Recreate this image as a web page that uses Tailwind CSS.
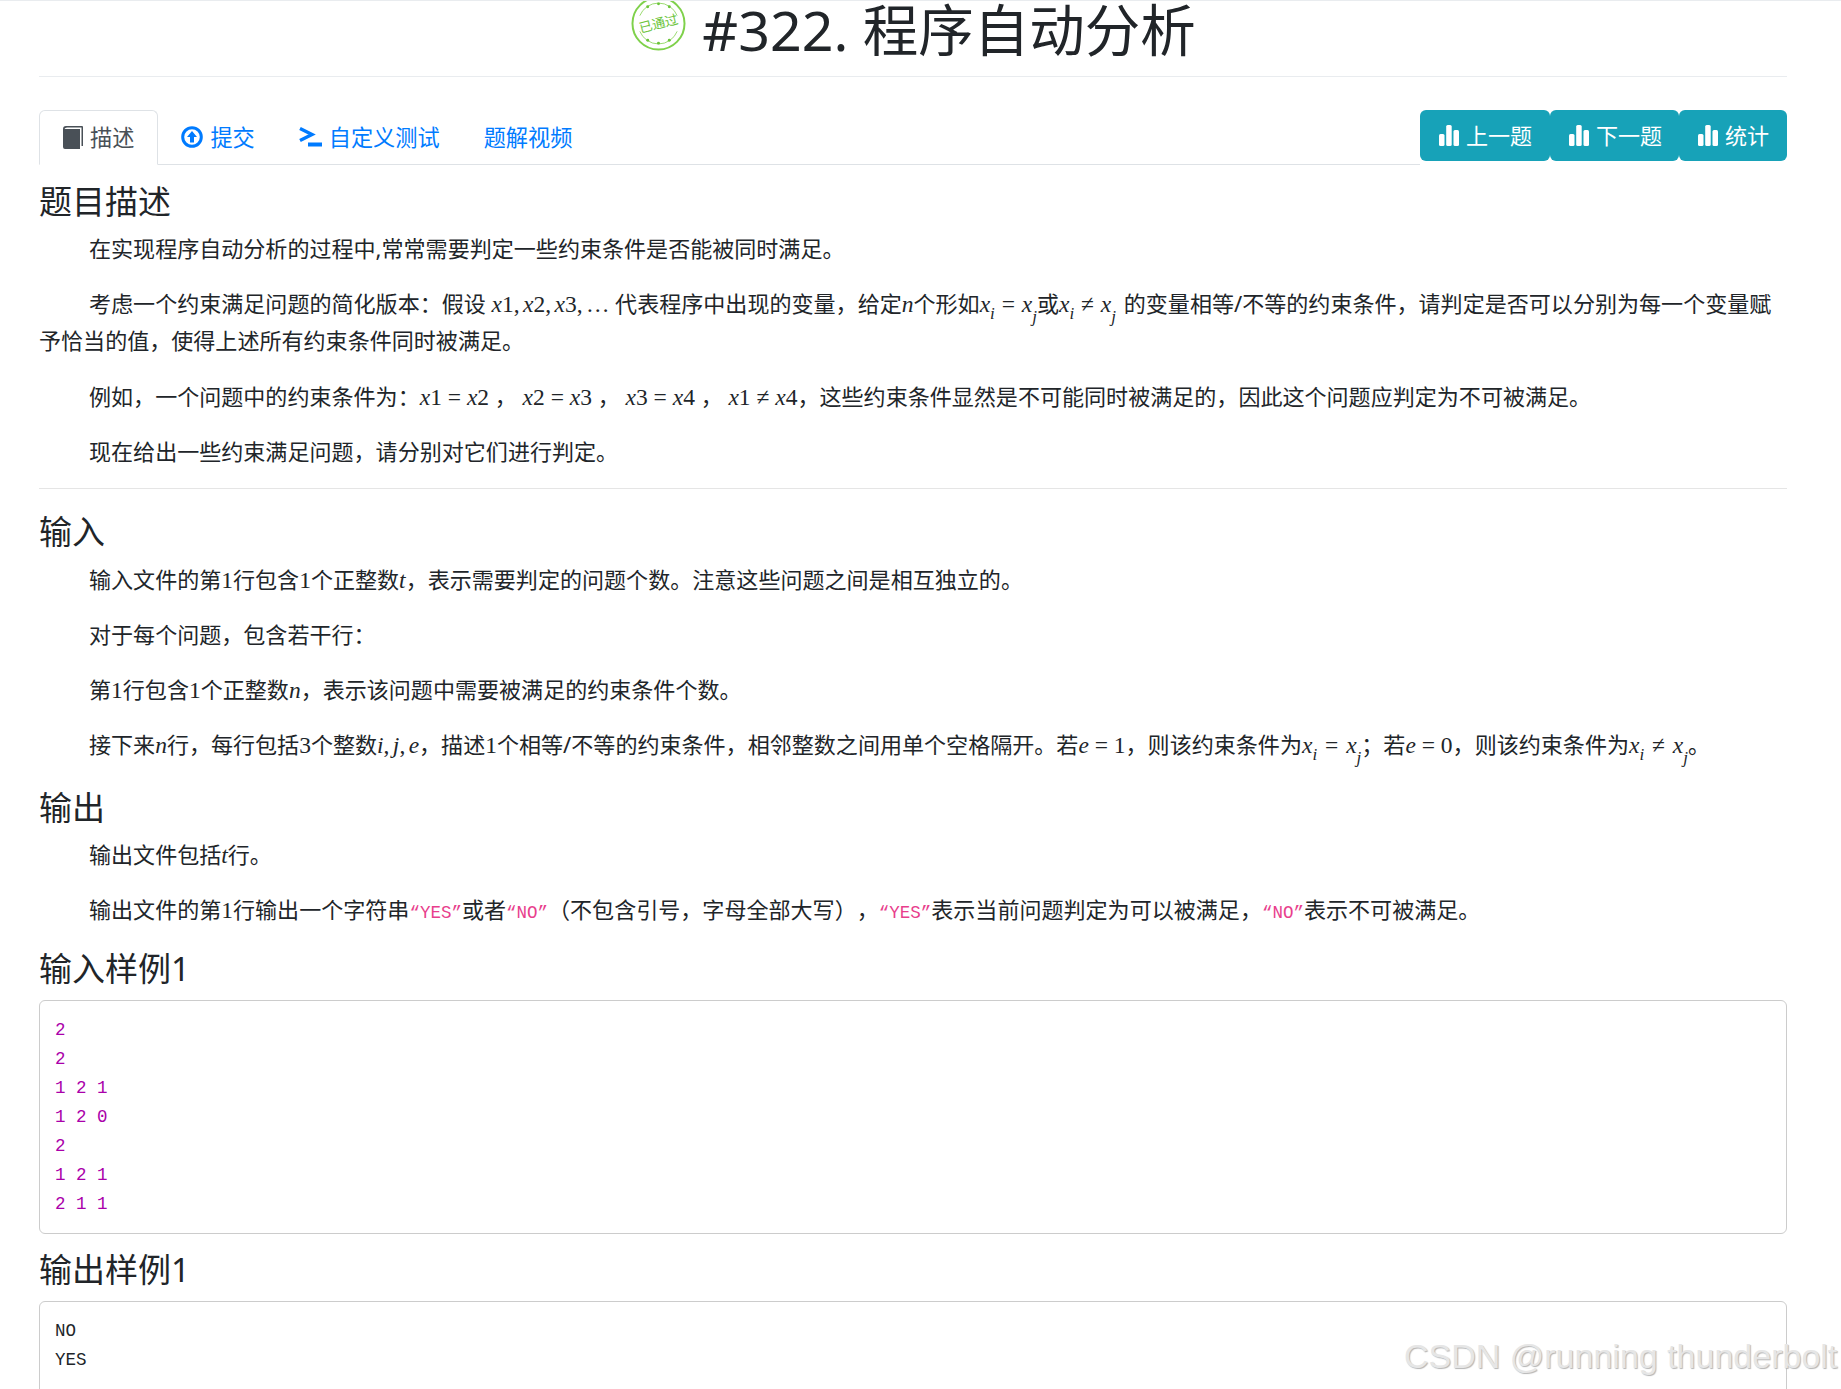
<!DOCTYPE html>
<html lang="zh-CN">
<head>
    <meta charset="UTF-8">
    <title>#322. 程序自动分析</title>
    <script src="https://cdn.jsdelivr.net/npm/@tailwindcss/browser@4"></script>
</head>
<body class="h-screen overflow-hidden bg-white text-[#212529] text-[22.05px] leading-[33px] [text-spacing-trim:space-all] font-['Noto_Sans','Noto_Sans_CJK_SC',sans-serif]">
    <div class="relative h-screen overflow-hidden border-t border-[#e9ecef]">
        <div class="ml-[39px] w-[1748px]">
            <!-- Title -->
            <div class="flex justify-center h-[76px] border-b border-[#e9ecef]">
                <svg class="w-[55px] h-[55px] -mt-[5px] ml-[1px] mr-[16px] shrink-0" viewBox="0 0 56 56" fill="none" stroke="#7fd14b">
                    <circle cx="28" cy="28" r="26.5" stroke-width="2"/>
                    <path d="M9 20 A20.5 20.5 0 0 1 47 20" stroke-width="0.8"/>
                    <path d="M9 36 A20.5 20.5 0 0 0 47 36" stroke-width="0.8"/>
                    <g fill="#6cc43a" stroke="none">
                        <circle cx="17" cy="11" r="1.5"/><circle cx="28" cy="8" r="1.5"/><circle cx="39" cy="11" r="1.5"/>
                        <circle cx="17" cy="45" r="1.5"/><circle cx="28" cy="48" r="1.5"/><circle cx="39" cy="45" r="1.5"/>
                        <text x="28" y="33" font-size="13.5" text-anchor="middle" transform="rotate(-14 28 28)">已通过</text>
                    </g>
                </svg>
                <h1 class="text-[55.5px] leading-[58px] font-normal">#322. 程序自动分析</h1>
            </div>

            <!-- Tabs -->
            <div class="flex items-start mt-[33px]">
                <ul class="flex flex-1 h-[55px] border-b border-[#dee2e6] text-[22.2px] text-[#007bff]">
                    <li class="flex items-center gap-[7px] h-[55px] px-[23px] border border-[#dee2e6] border-b-white rounded-t-[6px] bg-white text-[#495057]">
                        <svg class="w-[20px] h-[23px]" viewBox="0 0 20 23">
                            <path d="M3 0 H19 Q20 0 20 1 V20 H18.5 V1.5 H4 Q2 1.5 1.5 3 H17 V23 H2 Q0 23 0 21 V3 Q0 0 3 0 Z" fill="#495057"/>
                        </svg>
                        描述
                    </li>
                    <li class="flex items-center gap-[7px] h-[54px] pl-[23px] pr-[22px]">
                        <svg class="w-[22px] h-[22px]" viewBox="0 0 22 22">
                            <circle cx="11" cy="11" r="9.3" fill="none" stroke="#007bff" stroke-width="3"/>
                            <path d="M11 5 L16 11 H13 V16.5 H9 V11 H6 Z" fill="#007bff"/>
                        </svg>
                        提交
                    </li>
                    <li class="flex items-center gap-[7px] h-[54px] px-[22px]">
                        <svg class="w-[23px] h-[20px]" viewBox="0 0 23 20">
                            <path d="M1 1.5 L13 7.5 L1 13.5" fill="none" stroke="#007bff" stroke-width="3.4"/>
                            <rect x="9" y="15.5" width="14" height="4" fill="#007bff"/>
                        </svg>
                        自定义测试
                    </li>
                    <li class="flex items-center h-[54px] px-[22px]">题解视频</li>
                </ul>
                <div class="flex text-white whitespace-nowrap">
                    <a class="flex items-center gap-[7px] h-[51px] pl-[19px] w-[130px] bg-[#17a2b8] rounded-[6px]">
                        <svg class="w-[20px] h-[21px]" viewBox="0 0 20 21" fill="#fff"><rect y="9" width="5.5" height="12" rx="1.5"/><rect x="7.2" width="5.5" height="21" rx="1.5"/><rect x="14.5" y="5" width="5.5" height="16" rx="1.5"/></svg>
                        上一题
                    </a>
                    <a class="flex items-center gap-[7px] h-[51px] pl-[19px] w-[129px] bg-[#17a2b8] rounded-[6px]">
                        <svg class="w-[20px] h-[21px]" viewBox="0 0 20 21" fill="#fff"><rect y="9" width="5.5" height="12" rx="1.5"/><rect x="7.2" width="5.5" height="21" rx="1.5"/><rect x="14.5" y="5" width="5.5" height="16" rx="1.5"/></svg>
                        下一题
                    </a>
                    <a class="flex items-center gap-[7px] h-[51px] pl-[19px] w-[108px] bg-[#17a2b8] rounded-[6px]">
                        <svg class="w-[20px] h-[21px]" viewBox="0 0 20 21" fill="#fff"><rect y="9" width="5.5" height="12" rx="1.5"/><rect x="7.2" width="5.5" height="21" rx="1.5"/><rect x="14.5" y="5" width="5.5" height="16" rx="1.5"/></svg>
                        统计
                    </a>
                </div>
            </div>

            <!-- Description -->
            <h4 class="text-[33px] leading-[40px] font-normal mt-[17px] mb-[10px]">题目描述</h4>
            <p class="indent-[50px] mb-[20px]">在实现程序自动分析的过程中,常常需要判定一些约束条件是否能被同时满足。</p>
            <p class="indent-[50px] mb-[21px] leading-[37px]">考虑一个约束满足问题的简化版本：假设 <span class="font-['Liberation_Serif'] text-[23.5px] leading-none [word-spacing:-2.5px]"><i>x</i>1, <i>x</i>2, <i>x</i>3, …</span> 代表程序中出现的变量，给定<i class="font-['Liberation_Serif'] text-[23.5px] leading-none">n</i>个形如<span class="font-['Liberation_Serif'] text-[23.5px] leading-none [word-spacing:1px]"><i>x</i><i class="text-[17px] leading-[0] align-[-7px]">i</i> = <i>x</i><i class="text-[17px] leading-[0] align-[-10px]">j</i></span>或<span class="font-['Liberation_Serif'] text-[23.5px] leading-none mr-[2px] [word-spacing:1px]"><i>x</i><i class="text-[17px] leading-[0] align-[-7px]">i</i> ≠ <i>x</i><i class="text-[17px] leading-[0] align-[-10px]">j</i></span> 的变量相等/不等的约束条件，请判定是否可以分别为每一个变量赋<br>予恰当的值，使得上述所有约束条件同时被满足。</p>
            <p class="indent-[50px] mb-[22px]">例如，一个问题中的约束条件为：<span class="font-['Liberation_Serif'] text-[23.5px] leading-none"><i>x</i>1 = <i>x</i>2</span> ， <span class="font-['Liberation_Serif'] text-[23.5px] leading-none"><i>x</i>2 = <i>x</i>3</span> ， <span class="font-['Liberation_Serif'] text-[23.5px] leading-none"><i>x</i>3 = <i>x</i>4</span> ， <span class="font-['Liberation_Serif'] text-[23.5px] leading-none"><i>x</i>1 ≠ <i>x</i>4</span>，这些约束条件显然是不可能同时被满足的，因此这个问题应判定为不可被满足。</p>
            <p class="indent-[50px] mb-[20px]">现在给出一些约束满足问题，请分别对它们进行判定。</p>
            <hr class="border-t border-[#e5e5e5]">

            <!-- Input -->
            <h4 class="text-[33px] leading-[40px] font-normal mt-[23px] mb-[11px]">输入</h4>
            <p class="indent-[50px] mb-[22px]">输入文件的第<span class="font-['Liberation_Serif'] text-[23.5px] leading-none">1</span>行包含<span class="font-['Liberation_Serif'] text-[23.5px] leading-none">1</span>个正整数<i class="font-['Liberation_Serif'] text-[23.5px] leading-none">t</i>，表示需要判定的问题个数。注意这些问题之间是相互独立的。</p>
            <p class="indent-[50px] mb-[22px]">对于每个问题，包含若干行：</p>
            <p class="indent-[50px] mb-[22px]">第<span class="font-['Liberation_Serif'] text-[23.5px] leading-none">1</span>行包含<span class="font-['Liberation_Serif'] text-[23.5px] leading-none">1</span>个正整数<i class="font-['Liberation_Serif'] text-[23.5px] leading-none">n</i>，表示该问题中需要被满足的约束条件个数。</p>
            <p class="indent-[50px] mb-[27px]">接下来<i class="font-['Liberation_Serif'] text-[23.5px] leading-none">n</i>行，每行包括<span class="font-['Liberation_Serif'] text-[23.5px] leading-none">3</span>个整数<span class="font-['Liberation_Serif'] text-[23.5px] leading-none [word-spacing:-2.5px]"><i>i</i>, <i>j</i>, <i>e</i></span>，描述<span class="font-['Liberation_Serif'] text-[23.5px] leading-none">1</span>个相等/不等的约束条件，相邻整数之间用单个空格隔开。若<span class="font-['Liberation_Serif'] text-[23.5px] leading-none"><i>e</i> = 1</span>，则该约束条件为<span class="font-['Liberation_Serif'] text-[23.5px] leading-none [word-spacing:2px]"><i>x</i><i class="text-[17px] leading-[0] align-[-7px]">i</i> = <i>x</i><i class="text-[17px] leading-[0] align-[-10px]">j</i></span>；若<span class="font-['Liberation_Serif'] text-[23.5px] leading-none"><i>e</i> = 0</span>，则该约束条件为<span class="font-['Liberation_Serif'] text-[23.5px] leading-none [word-spacing:2px]"><i>x</i><i class="text-[17px] leading-[0] align-[-7px]">i</i> ≠ <i>x</i><i class="text-[17px] leading-[0] align-[-10px]">j</i></span>。</p>

            <!-- Output -->
            <h4 class="text-[33px] leading-[40px] font-normal mb-[10px]">输出</h4>
            <p class="indent-[50px] mb-[22px]">输出文件包括<i class="font-['Liberation_Serif'] text-[23.5px] leading-none">t</i>行。</p>
            <p class="indent-[50px] mb-[23px]">输出文件的第<span class="font-['Liberation_Serif'] text-[23.5px] leading-none">1</span>行输出一个字符串<code class="font-['Liberation_Mono'] text-[17.5px] leading-none text-[#e83e8c]">“YES”</code>或者<code class="font-['Liberation_Mono'] text-[17.5px] leading-none text-[#e83e8c]">“NO”</code>（不包含引号，字母全部大写），<code class="font-['Liberation_Mono'] text-[17.5px] leading-none text-[#e83e8c]">“YES”</code>表示当前问题判定为可以被满足，<code class="font-['Liberation_Mono'] text-[17.5px] leading-none text-[#e83e8c]">“NO”</code>表示不可被满足。</p>

            <!-- Samples -->
            <h4 class="text-[33px] leading-[40px] font-normal mb-[11px]">输入样例1</h4>
            <pre class="border border-[#ccc] rounded-[6px] px-[15px] pt-[15px] pb-[14px] font-['Liberation_Mono'] text-[17.5px] leading-[29px] text-[#aa00aa]">2
2
1 2 1
1 2 0
2
1 2 1
2 1 1</pre>
            <h4 class="text-[33px] leading-[40px] font-normal mt-[16px] mb-[11px]">输出样例1</h4>
            <pre class="border border-[#ccc] rounded-[6px] px-[15px] pt-[15px] pb-[14px] h-[200px] font-['Liberation_Mono'] text-[17.5px] leading-[29px] text-[#212529]">NO
YES</pre>
        </div>

        <!-- Watermark -->
        <div class="absolute left-[1404px] top-[1333px] whitespace-nowrap font-['Liberation_Sans',sans-serif] text-[34px] leading-[44px] text-[#e6e6e6] [text-shadow:1px_1px_1px_#b5b5b5]">CSDN @running thunderbolt</div>
    </div>
</body>
</html>
